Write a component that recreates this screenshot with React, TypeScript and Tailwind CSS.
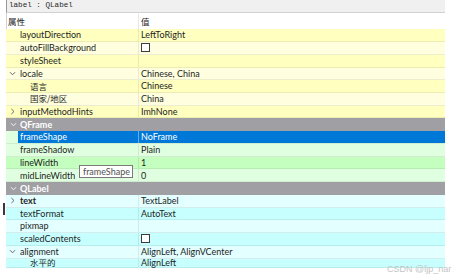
import React from "react";

type Row =
  | { kind: "section"; name: string }
  | {
      kind: "prop";
      name: string;
      value?: string;
      check?: boolean;
      arrow?: "down" | "right";
      depth?: number;
      bg: string;
      bold?: boolean;
      selected?: boolean;
      h?: string;
    };

const Y1 = "bg-[#ffffc0]";
const Y2 = "bg-[#ffffe0]";
const G1 = "bg-[#c4ffc0]";
const G2 = "bg-[#e0ffe0]";
const C1 = "bg-[#c7ffff]";
const C2 = "bg-[#e3ffff]";

const rows: Row[] = [
  { kind: "prop", name: "layoutDirection", value: "LeftToRight", bg: Y1 },
  { kind: "prop", name: "autoFillBackground", check: true, bg: Y2 },
  { kind: "prop", name: "styleSheet", value: "", bg: Y1 },
  { kind: "prop", name: "locale", value: "Chinese, China", arrow: "down", bg: Y2 },
  { kind: "prop", name: "语言", value: "Chinese", depth: 1, bg: Y1 },
  { kind: "prop", name: "国家/地区", value: "China", depth: 1, bg: Y2 },
  { kind: "prop", name: "inputMethodHints", value: "ImhNone", arrow: "right", bg: Y1 },
  { kind: "section", name: "QFrame" },
  { kind: "prop", name: "frameShape", value: "NoFrame", bg: G2, selected: true },
  { kind: "prop", name: "frameShadow", value: "Plain", bg: G2 },
  { kind: "prop", name: "lineWidth", value: "1", bg: G1 },
  { kind: "prop", name: "midLineWidth", value: "0", bg: G2 },
  { kind: "section", name: "QLabel" },
  { kind: "prop", name: "text", value: "TextLabel", arrow: "right", bold: true, bg: C2 },
  { kind: "prop", name: "textFormat", value: "AutoText", bg: C1 },
  { kind: "prop", name: "pixmap", value: "", bg: C2 },
  { kind: "prop", name: "scaledContents", check: true, bg: C1 },
  { kind: "prop", name: "alignment", value: "AlignLeft, AlignVCenter", arrow: "down", bg: C2 },
  { kind: "prop", name: "水平的", value: "AlignLeft", depth: 1, bg: C1, h: "h-[9px]" },
];

function Arrow({ dir, color }: { dir: "down" | "right"; color: string }) {
  return (
    <svg width="7" height="7" viewBox="0 0 7 7" className="block">
      {dir === "down" ? (
        <path d="M1 2.2 L3.5 4.8 L6 2.2" fill="none" stroke={color} strokeWidth="1" />
      ) : (
        <path d="M2.4 1 L5 3.5 L2.4 6" fill="none" stroke={color} strokeWidth="1" />
      )}
    </svg>
  );
}

function Check() {
  return <div className="w-[9px] h-[9px] border border-[#3c3c3c] bg-white" />;
}

export default function App() {
  return (
    <div className="relative w-[456px] h-[280px] bg-white overflow-hidden font-['Lato','Noto_Sans_CJK_SC',sans-serif] text-[9px] text-[#1e1e1e]">
      <div className="ml-[6px] w-[439px] flex flex-col">
        {/* title bar */}
        <div className="h-[13px] bg-[#f0f0f0] border-b border-[#d2d2d2] border-l border-l-[#9a9a9a] pl-[2px] flex items-center font-['Liberation_Mono',monospace] text-[7.6px] text-[#2a2a2a]">
          label : QLabel
        </div>
        {/* header */}
        <div className="h-[16.3px] flex items-center bg-white border-l border-l-[#d0d0d0] pt-[1px]">
          <div className="w-[131px] pl-[1px] font-['Noto_Sans_CJK_SC',sans-serif] text-[8.5px]">属性</div>
          <div className="flex-1 pl-[2px] border-l border-[#e6e6e6] h-full flex items-center font-['Noto_Sans_CJK_SC',sans-serif] text-[8.5px]">值</div>
        </div>
        {rows.map((r, i) => {
          if (r.kind === "section") {
            return (
              <div key={i} className="h-[12.74px] bg-[#a0a0a4] flex items-center text-white font-bold">
                <div className="w-[14px] flex justify-center pl-[1px]">
                  <Arrow dir="down" color="#f4f4f4" />
                </div>
                <span>{r.name}</span>
              </div>
            );
          }
          const sel = r.selected;
          return (
            <div
              key={i}
              className={`${r.h ?? "h-[12.74px]"} ${r.bg} flex border-b border-black/[0.07]`}
            >
              <div className="w-[12px] flex items-center justify-center shrink-0">
                {r.arrow ? <Arrow dir={r.arrow} color="#6a6a6a" /> : null}
              </div>
              <div
                className={`flex flex-1 items-center ${sel ? "bg-[#0078d7] text-white" : ""}`}
              >
                <div
                  className={`w-[120px] shrink-0 flex items-center h-full ${
                    r.depth ? "pl-[12px]" : "pl-[2px]"
                  } ${r.bold ? "font-bold" : ""} ${r.depth ? "font-['Noto_Sans_CJK_SC',sans-serif] text-[8.5px]" : ""}`}
                >
                  {r.name}
                </div>
                <div
                  className={`flex-1 h-full flex items-center pl-[2px] border-l ${
                    sel ? "border-white/40" : "border-black/[0.08]"
                  }`}
                >
                  {r.check ? <Check /> : r.value}
                </div>
              </div>
            </div>
          );
        })}
      </div>

      {/* tooltip */}
      <div className="absolute left-[79px] top-[165px] w-[54px] h-[13px] border border-[#7a7a7a] bg-white text-[#505050] flex items-center pl-[3px] text-[9px]">
        frameShape
      </div>

      {/* cursor mark */}
      <div className="absolute left-[3px] top-[203px] w-[2px] h-[12px] bg-[#3a3a3a]" />

      {/* watermark */}
      <div className="absolute left-[387px] top-[263px] font-['Liberation_Sans',sans-serif] text-[9px] text-[#c4c4c4]">
        CSDN @ljp_nar
      </div>
    </div>
  );
}
